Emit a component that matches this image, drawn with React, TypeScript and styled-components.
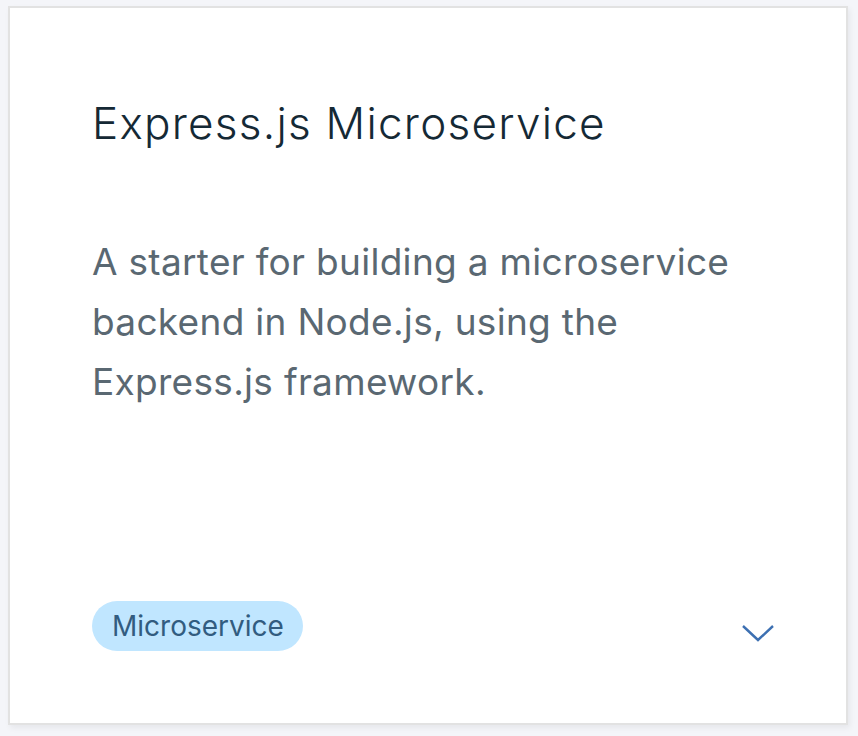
import React from "react";
import styled, { createGlobalStyle } from "styled-components";

const Global = createGlobalStyle`
  html, body { margin: 0; padding: 0; background: #f4f5f9; }
  body { font-family: "Inter", "Open Sans", sans-serif; }
  * { box-sizing: border-box; }
`;

const Page = styled.div`
  padding: 6px 10px 11px 8px;
  height: 736px;
`;

const Card = styled.div`
  height: 719px;
  background: #ffffff;
  border: 2px solid #e2e2e2;
  box-shadow: 2px 3px 6px rgba(0, 0, 0, 0.06);
  display: flex;
  flex-direction: column;
  padding: 86px 72px 72px 82px;
`;

const Title = styled.h2`
  margin: 0;
  font-weight: 300;
  font-size: 44px;
  line-height: 58px;
  letter-spacing: 1.25px;
  color: #152935;
`;

const Description = styled.p`
  margin: 80px 0 0;
  font-weight: 400;
  font-size: 37px;
  line-height: 60px;
  letter-spacing: 0.3px;
  color: #5a6872;
`;

const Footer = styled.div`
  margin-top: auto;
  display: flex;
  align-items: center;
  justify-content: space-between;
`;

const Tag = styled.span`
  display: inline-flex;
  align-items: center;
  height: 50px;
  padding: 0 19px 0 20px;
  border-radius: 25px;
  background: #c0e6ff;
  color: #325c80;
  font-size: 28px;
  font-weight: 400;
`;

const Chevron = styled.svg`
  width: 32px;
  height: 18px;
  margin-top: 14px;
`;

export default function App() {
  return (
    <>
      <Global />
      <Page>
        <Card>
          <Title>Express.js Microservice</Title>
          <Description>
            A starter for building a microservice backend in Node.js, using the Express.js framework.
          </Description>
          <Footer>
            <Tag>Microservice</Tag>
            <Chevron viewBox="0 0 32 18" fill="none">
              <path d="M1 2 L16 16 L31 2" stroke="#3d70b2" strokeWidth="2.4" />
            </Chevron>
          </Footer>
        </Card>
      </Page>
    </>
  );
}
